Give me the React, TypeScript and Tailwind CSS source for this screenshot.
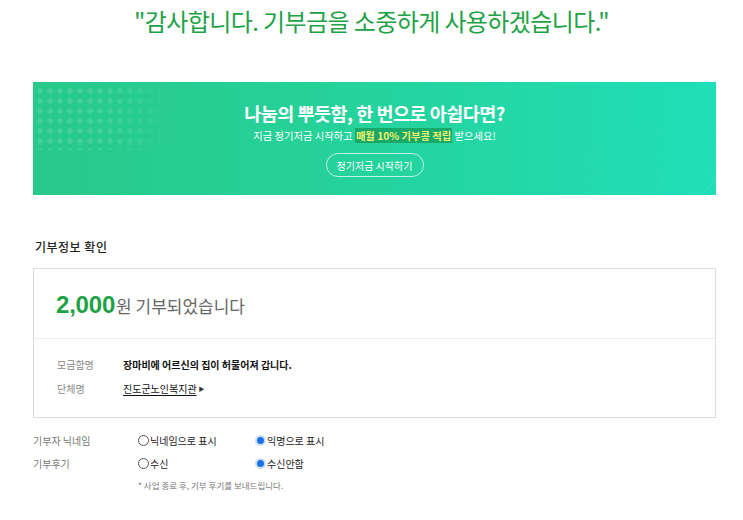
import React from 'react';

const Radio = ({ checked, label }: { checked?: boolean; label: string }) => (
  <label className="flex items-center text-[10px] text-[#222]">
    {checked ? (
      <span className="w-[11px] h-[11px] rounded-full bg-[#1a73e8] border-[2.5px] border-[#cfe0f7] mr-[1px]" />
    ) : (
      <span className="w-[11px] h-[11px] rounded-full border border-[#555] mr-[1px]" />
    )}
    {label}
  </label>
);

const App: React.FC = () => {
  return (
    <div className="w-[743px] h-[520px] bg-white font-['Noto_Sans_CJK_KR',sans-serif] overflow-hidden">
      <h1 className="pt-[5px] text-center text-[24px] leading-[32px] font-normal text-[#1ea246] tracking-[-0.6px]">
        "감사합니다. 기부금을 소중하게 사용하겠습니다."
      </h1>

      <div className="relative ml-[33px] w-[683px] mt-[45px] h-[113px] bg-gradient-to-r from-[#28c98a] via-[#25d39c] to-[#20deb8] overflow-hidden">
        <div className="absolute left-[2px] top-[4px] w-[150px] h-[64px] bg-[radial-gradient(circle,rgba(255,255,255,0.13)_2.5px,transparent_3px)] bg-[length:10px_10px] [mask-image:linear-gradient(to_right,black_40%,transparent)]" />
        <div className="absolute right-0 bottom-0 w-[150px] h-[70px] bg-[repeating-linear-gradient(135deg,rgba(255,255,255,0.06)_0_1px,transparent_1px_9px)] [mask-image:linear-gradient(to_top_left,black,transparent)]" />
        <div className="relative flex flex-col items-center pt-[19px]">
          <div className="text-[18.5px] leading-[24px] font-bold text-white tracking-[-0.5px]">나눔의 뿌듯함, 한 번으로 아쉽다면?</div>
          <div className="mt-[3px] text-[10.3px] leading-[16px] text-white">
            지금 정기저금 시작하고{' '}
            <span className="bg-[#17a86a] text-[#f3f36b] font-bold px-[1px]">매월 10% 기부콩 적립</span> 받으세요!
          </div>
          <div className="mt-[9px] w-[98px] h-[24px] rounded-full border border-white/70 flex items-center justify-center text-[10px] text-white">
            정기저금 시작하기
          </div>
        </div>
      </div>

      <div className="ml-[33px] w-[683px] mt-[44px]">
        <div className="pl-[2px] text-[12px] leading-[16px] font-medium text-[#222] tracking-[0.5px]">기부정보 확인</div>
        <div className="mt-[13px] border border-[#dcdcdc]">
          <div className="h-[70px] flex items-center pl-[22px] pt-[3px] border-b border-[#ececec]">
            <span className="text-[24px] font-bold text-[#1ea246] font-['Liberation_Sans',sans-serif] tracking-[-0.2px]">2,000</span>
            <span className="ml-[1px] mt-[2px] text-[17px] text-[#666]">원 기부되었습니다</span>
          </div>
          <div className="pt-[14px] pb-[16px] pl-[23px] text-[10px] leading-[24px]">
            <div className="flex">
              <span className="w-[66px] text-[#888]">모금함명</span>
              <span className="font-bold text-[#111]">장마비에 어르신의 집이 허물어져 갑니다.</span>
            </div>
            <div className="flex items-center">
              <span className="w-[66px] text-[#888]">단체명</span>
              <span className="underline underline-offset-2 text-[#111]">진도군노인복지관</span>
              <span className="ml-[2px] text-[6px] text-[#333]">▶</span>
            </div>
          </div>
        </div>

        <div className="mt-[11px] text-[10px] leading-[23px]">
          <div className="flex items-center">
            <span className="w-[105px] text-[#777]">기부자 닉네임</span>
            <div className="w-[117px]"><Radio label="닉네임으로 표시" /></div>
            <Radio checked label="익명으로 표시" />
          </div>
          <div className="flex items-center">
            <span className="w-[105px] text-[#777]">기부후기</span>
            <div className="w-[117px]"><Radio label="수신" /></div>
            <Radio checked label="수신안함" />
          </div>
          <div className="pl-[105px] text-[8.5px] leading-[20px] text-[#777]">* 사업 종료 후, 기부 후기를 보내드립니다.</div>
        </div>
      </div>
    </div>
  );
};

export default App;
